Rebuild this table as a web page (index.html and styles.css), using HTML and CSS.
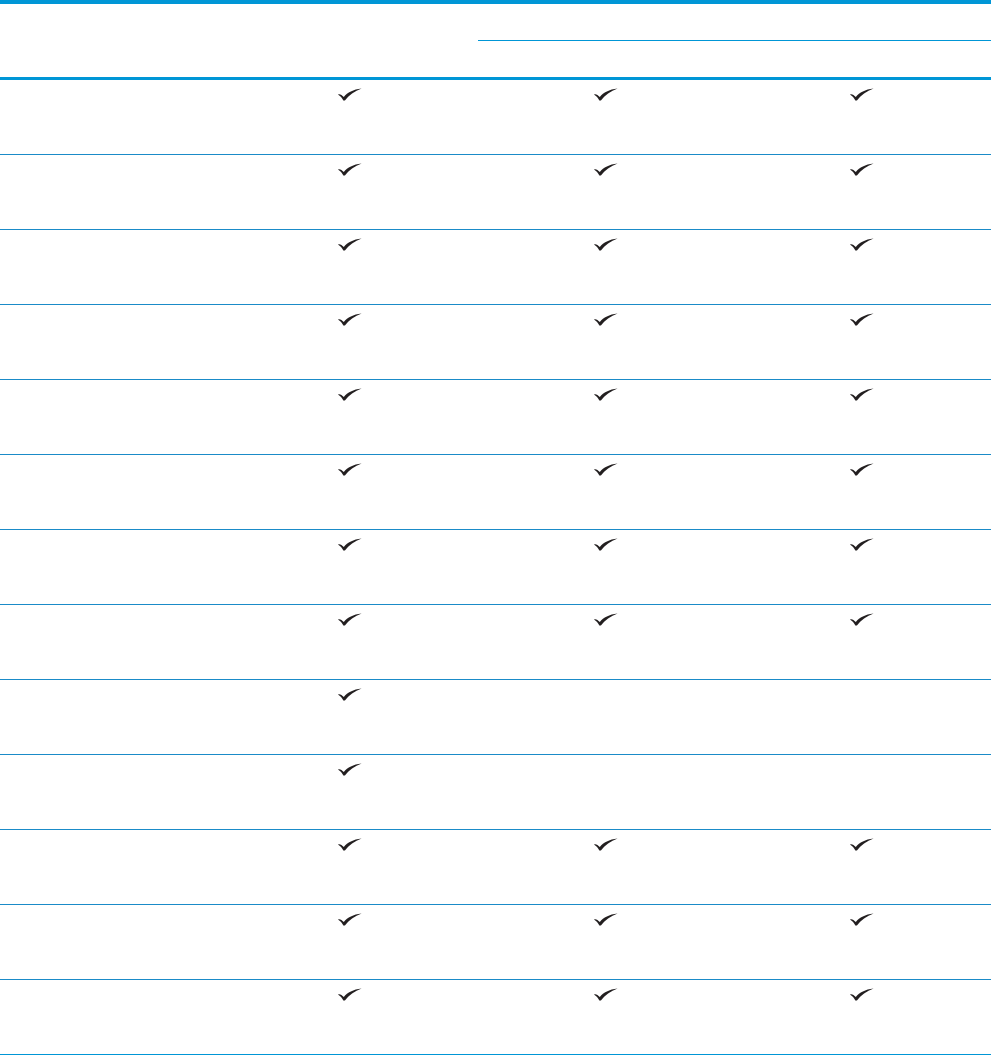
FILE: index.html
```html
<!DOCTYPE html>
<html>
<head>
<meta charset="utf-8">
<link rel="stylesheet" href="styles.css">
</head>
<body>
<table class="spec">
  <colgroup>
    <col class="c1"><col class="c2"><col class="c3"><col class="c4">
  </colgroup>
  <thead>
    <tr class="h1"><th></th><th></th><th colspan="2" class="sub"></th></tr>
    <tr class="h2"><th></th><th></th><th></th><th></th></tr>
  </thead>
  <tbody id="rows"></tbody>
</table>
<template id="chk"><svg class="chk" viewBox="0 0 24 13" width="24" height="13"><path d="M0 6.4C2.2 5.8 3.8 7 5.8 9C9.6 4.6 15 1.6 23.6 0.6C16.6 3.2 10.8 7.4 6.9 12.6L5.3 12.6C4.2 9.8 2.2 7.8 0 6.4Z"/></svg></template>
<script src="script.js"></script>
</body>
</html>
```

FILE: script.js
```js
var pattern = [3,3,3,3,3,3,3,3,1,1,3,3,3];
var body = document.getElementById('rows');
var svg = document.getElementById('chk').innerHTML;
pattern.forEach(function (n) {
  var tr = document.createElement('tr');
  tr.className = 'row';
  for (var i = 0; i < 4; i++) {
    var td = document.createElement('td');
    if (i > 0 && i <= n) td.innerHTML = svg;
    tr.appendChild(td);
  }
  body.appendChild(tr);
});
```

FILE: styles.css
```css
html, body {
  margin: 0;
  padding: 0;
  background: #fff;
  font-family: "Liberation Sans", Arial, sans-serif;
}
.spec {
  width: 991px;
  table-layout: fixed;
  border-collapse: collapse;
  border-top: 4px solid #0096d6;
}
.c1 { width: 221px; }
.c2 { width: 257px; }
.c3 { width: 256px; }
.c4 { width: 257px; }
th, td {
  padding: 0;
}
.h1 th { height: 36px; }
.h1 th.sub { border-bottom: 1px solid #0096d6; }
.h2 th {
  height: 36px;
  border-bottom: 3px solid #0096d6;
}
.row td {
  height: 74px;
  border-bottom: 1px solid #1a8bc8;
  vertical-align: top;
  text-align: center;
}
.row:last-child td {
  border-bottom: 2px solid #0096d6;
}
.chk {
  display: block;
  margin: 8px auto 0;
  fill: #231f20;
}
.row td:nth-child(2) .chk { margin-left: 117px; }
.row td:nth-child(3) .chk { margin-left: 116px; }
.row td:nth-child(4) .chk { margin-left: 116px; }
```
